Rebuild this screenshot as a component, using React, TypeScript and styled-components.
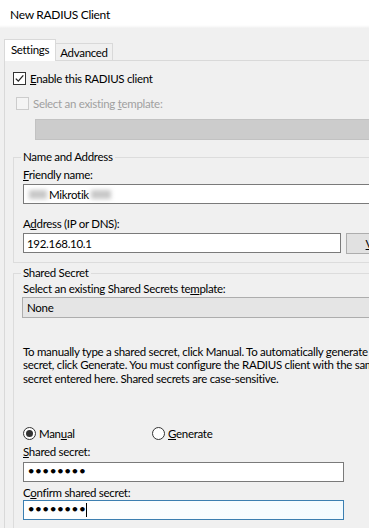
import React from "react";
import styled, { createGlobalStyle } from "styled-components";

const GlobalStyle = createGlobalStyle`
  html, body {
    margin: 0;
    padding: 0;
    background: #f0f0f0;
  }
  body {
    font-family: Lato, "Liberation Sans", sans-serif;
    font-size: 11.5px;
    letter-spacing: -0.3px;
    color: #000;
  }
`;

export default function App() {
  return (
    <Window>
      <GlobalStyle />
      <TitleBar>New RADIUS Client</TitleBar>
      <Body>
        <TabStrip>
          <Tab $active>Settings</Tab>
          <Tab>Advanced</Tab>
        </TabStrip>
        <Panel>
          <CheckRow $indent={8} $top={11}>
            <CheckBox>
              <svg width="11" height="11" viewBox="0 0 11 11">
                <path d="M1.8 5.6 L4.3 8.1 L9.3 2.4" fill="none" stroke="#222" strokeWidth="1.3" />
              </svg>
            </CheckBox>
            <span>
              <U>E</U>nable this RADIUS client
            </span>
          </CheckRow>
          <CheckRow $indent={11} $top={12} $disabled>
            <CheckBox $disabled />
            <span>
              Select an existing <U>t</U>emplate:
            </span>
          </CheckRow>
          <DisabledCombo />

          <Group $top={11}>
            <Legend>Name and Address</Legend>
            <FieldLabel $top={6}>
              <U>F</U>riendly name:
            </FieldLabel>
            <TextBox $wide>
              <Redacted $w={18} />
              <span>Mikrotik</span>
              <Redacted $w={20} />
            </TextBox>
            <FieldLabel $top={14}>
              A<U>d</U>dress (IP or DNS):
            </FieldLabel>
            <FieldRow>
              <TextBox $width={318}>192.168.10.1</TextBox>
              <Button>
                <U>V</U>erify...
              </Button>
            </FieldRow>
          </Group>

          <Group $top={4}>
            <Legend>Shared Secret</Legend>
            <FieldLabel $top={4} $gap={2}>
              Select an existing Shared Secrets te<U>m</U>plate:
            </FieldLabel>
            <Combo>None</Combo>
            <Info>
              To manually type a shared secret, click Manual. To automatically generate a shared
              <br />
              secret, click Generate. You must configure the RADIUS client with the same shared
              <br />
              secret entered here. Shared secrets are case-sensitive.
            </Info>
            <RadioRow>
              <RadioItem $width={129}>
                <Radio $checked />
                <span>
                  Man<U>u</U>al
                </span>
              </RadioItem>
              <RadioItem>
                <Radio />
                <span>
                  <U>G</U>enerate
                </span>
              </RadioItem>
            </RadioRow>
            <FieldLabel $top={6} $gap={4}>
              <U>S</U>hared secret:
            </FieldLabel>
            <TextBox $width={321}>
              <Dots>••••••••</Dots>
            </TextBox>
            <FieldLabel $top={5} $gap={1}>
              C<U>o</U>nfirm shared secret:
            </FieldLabel>
            <TextBox $width={321} $focused>
              <Dots>••••••••</Dots>
              <Caret />
            </TextBox>
          </Group>
        </Panel>
      </Body>
    </Window>
  );
}

const Window = styled.div`
  width: 369px;
  height: 528px;
  overflow: hidden;
  background: #f0f0f0;
`;

const TitleBar = styled.div`
  height: 28px;
  padding-left: 10px;
  display: flex;
  align-items: center;
  font-size: 12px;
  background: linear-gradient(#ffffff 0, #ffffff 25px, #f7f7f7 27px, #f0f0f0 28px);
`;

const Body = styled.div`
  padding: 11px 0 0 4px;
`;

// tabs

const TabStrip = styled.div`
  display: flex;
  align-items: flex-end;
  margin-bottom: -1px;
  position: relative;
  z-index: 1;
`;

const Tab = styled.div<{ $active?: boolean }>`
  box-sizing: border-box;
  height: ${({ $active }) => ($active ? "22px" : "18px")};
  width: ${({ $active }) => ($active ? "52px" : "57px")};
  display: flex;
  align-items: center;
  justify-content: center;
  padding-bottom: ${({ $active }) => ($active ? "2px" : "0")};
  background: ${({ $active }) => ($active ? "#ffffff" : "#f0f0f0")};
  border: 1px solid #d9d9d9;
  border-bottom: ${({ $active }) => ($active ? "none" : "1px solid #d9d9d9")};
  border-left: ${({ $active }) => ($active ? "1px solid #d9d9d9" : "none")};
`;

const Panel = styled.div`
  width: 430px;
  height: 520px;
  border-top: 1px solid #d9d9d9;
  border-left: 1px solid #d9d9d9;
  background: #f0f0f0;
`;

// check boxes

const CheckRow = styled.div<{ $indent: number; $top: number; $disabled?: boolean }>`
  display: flex;
  align-items: center;
  gap: 4px;
  height: 13px;
  margin: ${({ $top }) => $top}px 0 0 ${({ $indent }) => $indent}px;
  color: ${({ $disabled }) => ($disabled ? "#a0a0a0" : "#000")};
`;

const CheckBox = styled.div<{ $disabled?: boolean }>`
  box-sizing: border-box;
  width: 13px;
  height: 13px;
  display: flex;
  align-items: center;
  justify-content: center;
  border: 1px solid ${({ $disabled }) => ($disabled ? "#cccccc" : "#333333")};
  background: ${({ $disabled }) => ($disabled ? "#f4f4f4" : "#ffffff")};
`;

const DisabledCombo = styled.div`
  box-sizing: border-box;
  height: 21px;
  margin: 9px 0 0 30px;
  background: #cccccc;
  border: 1px solid #c2c2c2;
`;

const U = styled.span`
  text-decoration: underline;
`;

// group boxes

const Group = styled.fieldset<{ $top: number }>`
  margin: ${({ $top }) => $top}px 0 0 8px;
  padding: 0 0 8px 9px;
  border: 1px solid #dcdcdc;
  border-right: none;
  min-width: 0;
`;

const Legend = styled.legend`
  padding: 0 2px;
  margin-left: -2px;
  line-height: 12px;
`;

const FieldLabel = styled.div<{ $top: number; $gap?: number }>`
  line-height: 12px;
  margin-top: ${({ $top }) => $top}px;
  margin-bottom: ${({ $gap }) => ($gap ?? 3)}px;
`;

const FieldRow = styled.div`
  display: flex;
  gap: 5px;
`;

const TextBox = styled.div<{ $width?: number; $wide?: boolean; $focused?: boolean }>`
  box-sizing: border-box;
  height: 20px;
  width: ${({ $width, $wide }) => ($wide ? "420px" : `${$width}px`)};
  display: flex;
  align-items: center;
  padding-left: 3px;
  background: ${({ $focused }) => ($focused ? "linear-gradient(90deg, #ffffff, #f3fbff)" : "#ffffff")};
  border: 1px solid ${({ $focused }) => ($focused ? "#3c7fb1" : "#7a7a7a")};
`;

const Redacted = styled.span<{ $w: number }>`
  display: inline-block;
  width: ${({ $w }) => $w}px;
  height: 9px;
  margin: 0 2px;
  background: #c8c8c8;
  filter: blur(2px);
`;

const Button = styled.div`
  box-sizing: border-box;
  width: 75px;
  height: 21px;
  display: flex;
  align-items: center;
  justify-content: center;
  background: #e1e1e1;
  border: 1px solid #adadad;
`;

const Combo = styled.div`
  box-sizing: border-box;
  height: 21px;
  margin-left: -1px;
  padding-left: 4px;
  display: flex;
  align-items: center;
  background: #e5e5e5;
  border: 1px solid #adadad;
`;

const Info = styled.p`
  margin: 27px 0 0 0;
  line-height: 13.3px;
  white-space: nowrap;
`;

// radios

const RadioRow = styled.div`
  display: flex;
  margin-top: 42px;
  height: 13px;
`;

const RadioItem = styled.div<{ $width?: number }>`
  display: flex;
  align-items: center;
  gap: 3px;
  width: ${({ $width }) => ($width ? `${$width}px` : "auto")};
`;

const Radio = styled.div<{ $checked?: boolean }>`
  box-sizing: border-box;
  width: 13px;
  height: 13px;
  border-radius: 50%;
  border: 1px solid #333333;
  background: #ffffff;
  display: flex;
  align-items: center;
  justify-content: center;

  &::after {
    content: "";
    display: ${({ $checked }) => ($checked ? "block" : "none")};
    width: 7px;
    height: 7px;
    border-radius: 50%;
    background: #333333;
  }
`;

const Dots = styled.span`
  font-family: "DejaVu Sans", sans-serif;
  font-size: 13px;
  font-weight: bold;
  letter-spacing: -1px;
  line-height: 12px;
`;

const Caret = styled.span`
  width: 1px;
  height: 14px;
  margin-left: 1px;
  background: #000;
`;
